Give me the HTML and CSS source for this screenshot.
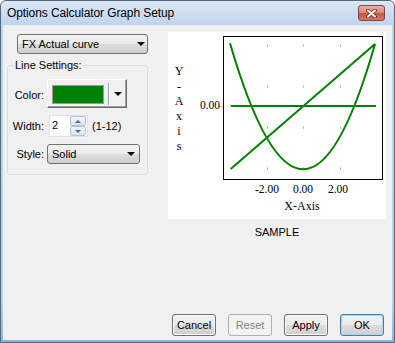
FILE: index.html
```html
<!DOCTYPE html>
<html lang="en">
<head>
  <meta charset="UTF-8">
  <title>Options Calculator Graph Setup</title>
  <link rel="stylesheet" href="styles.css">
</head>
<body>
  <div class="janela">
    <div class="titulo">
      <span class="titulo-texto">Options Calculator Graph Setup</span>
      <span class="fechar">
        <svg width="11" height="9" viewBox="0 0 11 9">
          <path d="M2 1.5l7 6M9 1.5l-7 6" stroke="#5a2a26" stroke-width="3.6" stroke-linecap="round"/>
          <path d="M2 1.5l7 6M9 1.5l-7 6" stroke="#fff" stroke-width="2" stroke-linecap="round"/>
        </svg>
      </span>
    </div>

    <div class="cliente">
      <div class="principal">
        <div class="esquerda">
          <div class="combo combo-curva">FX Actual curve<span class="seta"></span></div>

          <fieldset class="grupo">
            <legend>Line Settings:</legend>

            <div class="linha linha-cor">
              <span class="rotulo">Color:</span>
              <div class="botao-cor">
                <span class="amostra-cor"></span>
                <span class="separador"></span>
                <span class="seta"></span>
              </div>
            </div>

            <div class="linha linha-largura">
              <span class="rotulo">Width:</span>
              <div class="spin">
                <span class="spin-valor">2</span>
                <span class="spin-botoes">
                  <span class="spin-botao"><span class="seta-cima"></span></span>
                  <span class="spin-botao"><span class="seta-baixo"></span></span>
                </span>
              </div>
              <span class="faixa">(1-12)</span>
            </div>

            <div class="linha linha-estilo">
              <span class="rotulo">Style:</span>
              <div class="combo combo-estilo">Solid<span class="seta"></span></div>
            </div>
          </fieldset>
        </div>

        <div class="direita">
          <svg class="grafico" width="218" height="187" viewBox="0 0 218 187">
            <path d="M99.5 12v3M135.5 12v3M172.5 12v3M99.5 53v3M135.5 53v3M172.5 53v3M99.5 94v3M135.5 94v3M172.5 94v3M99.5 135v3M135.5 135v3M172.5 135v3M50 74.5h5" stroke="#c0c0c0" fill="none"/>
            <rect x="55.5" y="4.5" width="159" height="143" fill="none" stroke="#000"/>

            <g font-family="Liberation Serif, serif" font-size="12" fill="#000">
              <text x="11" y="43" text-anchor="middle">Y</text>
              <text x="11" y="59" text-anchor="middle">-</text>
              <text x="11" y="73" text-anchor="middle">A</text>
              <text x="11" y="88" text-anchor="middle">x</text>
              <text x="11" y="103" text-anchor="middle">i</text>
              <text x="11" y="118" text-anchor="middle">s</text>
              <text x="134" y="178" text-anchor="middle">X-Axis</text>
            </g>
            <g font-family="Liberation Serif, serif" font-size="11.5" fill="#000">
              <text x="52" y="77" text-anchor="end">0.00</text>
              <text x="99" y="161" text-anchor="middle">-2.00</text>
              <text x="135" y="161" text-anchor="middle">0.00</text>
              <text x="170" y="161" text-anchor="middle">2.00</text>
            </g>

            <g stroke="#008000" stroke-width="2" fill="none">
              <path d="M62.7 74H208"/>
              <path d="M62.7 137L207 12"/>
              <path d="M62 11.3Q135.5 263 207 12"/>
            </g>
          </svg>
          <div class="legenda">SAMPLE</div>
        </div>
      </div>

      <div class="botoes">
        <button class="botao">Cancel</button>
        <button class="botao" disabled>Reset</button>
        <button class="botao">Apply</button>
        <button class="botao botao-ok">OK</button>
      </div>
    </div>
  </div>
</body>
</html>
```

FILE: styles.css
```css
* {
  box-sizing: border-box;
}

body {
  margin: 0;
  background: #fff;
  color: #000;
  font-family: "Liberation Sans", Arial, sans-serif;
  font-size: 11px;
}

.janela {
  width: 395px;
  height: 343px;
  display: flex;
  flex-direction: column;
  padding: 0 2px 2px;
  border: 1px solid #56687c;
  border-radius: 6px 6px 0 0;
  background: linear-gradient(#dbe7f5, #bfd4ec 24px, #b9d0ea 300px, #7fb8e0);
}

.titulo {
  height: 24px;
  display: flex;
  align-items: center;
  justify-content: space-between;
  padding: 0 7px 0 4px;
}

.titulo-texto {
  font-size: 12px;
  letter-spacing: -0.1px;
}

.fechar {
  width: 27px;
  height: 16px;
  display: flex;
  align-items: center;
  justify-content: center;
  border: 1px solid #83453f;
  border-radius: 3px;
  background: linear-gradient(#eab1a8, #d9887b 45%, #c7533f 55%, #d47a64);
}

.cliente {
  flex: 1;
  display: flex;
  flex-direction: column;
  background: #f0f0f0;
}

.principal {
  display: flex;
  padding-top: 7px;
}

.esquerda {
  width: 165px;
  padding-top: 2px;
}

/* combos e botoes no estilo do Windows 7 */
.combo {
  height: 20px;
  display: flex;
  align-items: center;
  justify-content: space-between;
  padding: 0 4px;
  border: 1px solid #707070;
  border-radius: 3px;
  background: linear-gradient(#f2f2f2, #ebebeb 50%, #dddddd 50%, #cfcfcf);
}

.combo-curva {
  width: 131px;
  margin-left: 14px;
  padding-right: 2px;
}

.combo-estilo {
  width: 93px;
}

.seta {
  width: 0;
  height: 0;
  border-left: 4px solid transparent;
  border-right: 4px solid transparent;
  border-top: 4px solid #000;
}

.grupo {
  width: 141px;
  margin: 5px 0 0 4px;
  padding: 7px 0 10px;
  border: 1px solid #d5dfe5;
  border-radius: 3px;
}

.grupo legend {
  margin-left: 6px;
  padding: 0 1px;
  line-height: 13px;
}

.linha {
  display: flex;
  align-items: center;
}

.rotulo {
  width: 36px;
  margin-right: 3px;
  text-align: right;
}

.linha-cor .rotulo {
  padding-top: 3px;
}

.linha-largura {
  margin-top: 7px;
}

.linha-estilo {
  margin-top: 7px;
}

.botao-cor {
  width: 80px;
  height: 29px;
  display: flex;
  align-items: center;
  padding: 0 4px;
  border-top: 1px solid #fff;
  border-left: 1px solid #fff;
  border-right: 1px solid #696969;
  border-bottom: 1px solid #696969;
  box-shadow: inset -1px -1px #a0a0a0;
  background: #f0f0f0;
}

.amostra-cor {
  width: 53px;
  height: 19px;
  margin-top: 2px;
  border: 1px solid #9a9a9a;
  background: #008000;
}

.separador {
  width: 2px;
  height: 22px;
  margin: 0 4px;
  border-left: 1px solid #a0a0a0;
  border-right: 1px solid #fff;
}

.spin {
  display: flex;
  height: 22px;
  margin-left: 2px;
  border: 1px solid #e2e2e2;
  background: #fff;
}

.spin-valor {
  width: 19px;
  padding: 3px 0 0 2px;
}

.spin-botoes {
  display: flex;
  flex-direction: column;
  justify-content: space-between;
  padding: 0 1px;
}

.spin-botao {
  width: 16px;
  height: 10px;
  display: flex;
  align-items: center;
  justify-content: center;
  border: 1px solid #b4c2d0;
  border-radius: 2px;
  background: linear-gradient(#f1f5fa, #d9e3ee);
}

.seta-cima,
.seta-baixo {
  width: 0;
  height: 0;
  border-left: 3px solid transparent;
  border-right: 3px solid transparent;
}

.seta-cima {
  border-bottom: 3px solid #4d6a96;
}

.seta-baixo {
  border-top: 3px solid #4d6a96;
}

.faixa {
  margin-left: 4px;
}

.direita {
  width: 218px;
}

.grafico {
  display: block;
  background: #fff;
}

.legenda {
  margin-top: 7px;
  text-align: center;
  line-height: 13px;
}

.botoes {
  margin-top: auto;
  display: flex;
  justify-content: flex-end;
  gap: 12px;
  padding: 0 8px 4px 0;
}

.botao {
  width: 44px;
  height: 22px;
  padding: 0;
  font-family: inherit;
  font-size: 11px;
  color: #000;
  border: 1px solid #707070;
  border-radius: 3px;
  box-shadow: inset 0 0 0 1px #fbfbfb;
  background: linear-gradient(#f2f2f2, #ebebeb 50%, #dddddd 50%, #cfcfcf);
}

.botao:disabled {
  color: #838383;
  border-color: #adb2b5;
  box-shadow: none;
  background: #f4f4f4;
}

.botao-ok {
  border-color: #3c7fb1;
  box-shadow: inset 0 0 0 1px #9fdcf8;
}
```
